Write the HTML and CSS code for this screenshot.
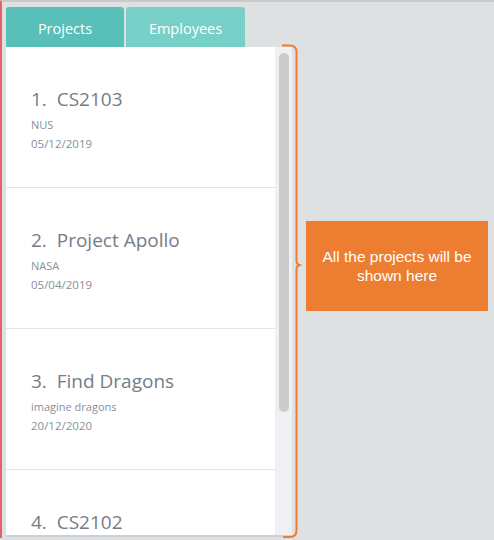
FILE: index.html
```html
<!DOCTYPE html>
<html>
<head>
<meta charset="utf-8">
<link rel="stylesheet" href="styles.css">
</head>
<body>
<div class="frame">
  <div class="app">
    <div class="tabs">
      <div class="tab tab-active">Projects</div>
      <div class="tab tab-other">Employees</div>
    </div>
    <div class="panel">
      <div class="list">
        <div class="card">
          <div class="title">1.&nbsp; CS2103</div>
          <div class="sub">NUS</div>
          <div class="date">05/12/2019</div>
        </div>
        <div class="card">
          <div class="title">2.&nbsp; Project Apollo</div>
          <div class="sub">NASA</div>
          <div class="date">05/04/2019</div>
        </div>
        <div class="card">
          <div class="title">3.&nbsp; Find Dragons</div>
          <div class="sub">imagine dragons</div>
          <div class="date">20/12/2020</div>
        </div>
        <div class="card card-last">
          <div class="title">4.&nbsp; CS2102</div>
        </div>
      </div>
      <div class="scrollbar"><div class="thumb"></div></div>
    </div>
  </div>
  <svg class="bracket" width="20" height="496" viewBox="0 0 20 496">
    <path d="M0 1.5 H8 Q14.5 1.5 14.5 8 V217 Q14.5 220 17.5 221 Q14.5 222 14.5 225 V486 Q14.5 493 8 493 H1" fill="none" stroke="#ed7d31" stroke-width="2"/>
  </svg>
  <div class="callout">All the projects will be shown here</div>
</div>
</body>
</html>
```
FILE: styles.css
```css
html, body {
  margin: 0;
  padding: 0;
}
body {
  width: 494px;
  height: 540px;
  background: #dfe0e2;
  overflow: hidden;
}
.frame {
  position: relative;
  height: 538px;
  border-top: 2px solid #c9cacc;
  border-left: 2px solid #ea5f6c;
  box-sizing: border-box;
  padding: 5px 0 0 4px;
}
.app {
  width: 286px;
  display: flex;
  flex-direction: column;
}
.tabs {
  display: flex;
  gap: 2px;
  height: 40px;
}
.tab {
  height: 40px;
  display: flex;
  align-items: center;
  justify-content: center;
  padding-top: 3px;
  box-sizing: border-box;
  color: #ffffff;
  font-family: "Open Sans", sans-serif;
  font-size: 14.5px;
  border-radius: 3px 3px 0 0;
}
.tab-active {
  width: 118px;
  background: #58c0b8;
}
.tab-other {
  width: 119px;
  background: #77d0c8;
}
.panel {
  display: flex;
  height: 488px;
  background: #eef0f3;
  border-bottom: 2px solid #cfd0d2;
  overflow: hidden;
}
.list {
  width: 269px;
  background: #ffffff;
  display: flex;
  flex-direction: column;
}
.card {
  flex: none;
  border-bottom: 1px solid #e3e4e7;
  padding: 39px 0 0 25px;
  box-sizing: content-box;
  height: 101px;
  font-family: "Open Sans", sans-serif;
}
.card-last {
  border-bottom: none;
}
.title {
  font-size: 19px;
  line-height: 26px;
  color: #737d88;
  white-space: pre;
}
.sub {
  font-size: 11px;
  line-height: 16px;
  margin-top: 5px;
  color: #878f99;
}
.date {
  font-size: 11.5px;
  line-height: 16px;
  margin-top: 3px;
  color: #878f99;
}
.scrollbar {
  width: 17px;
  padding: 6px 0 0 4px;
  box-sizing: border-box;
}
.thumb {
  width: 10px;
  height: 359px;
  background: #cbcbcb;
  border-radius: 5px;
}
.bracket {
  position: absolute;
  left: 280px;
  top: 42px;
}
.callout {
  position: absolute;
  left: 304px;
  top: 219px;
  width: 182px;
  height: 90px;
  background: #ed7d31;
  color: #ffffff;
  font-family: "Liberation Sans", Arial, sans-serif;
  font-size: 15.5px;
  line-height: 19px;
  display: flex;
  align-items: center;
  justify-content: center;
  text-align: center;
  padding: 0 8px;
  box-sizing: border-box;
}
```
